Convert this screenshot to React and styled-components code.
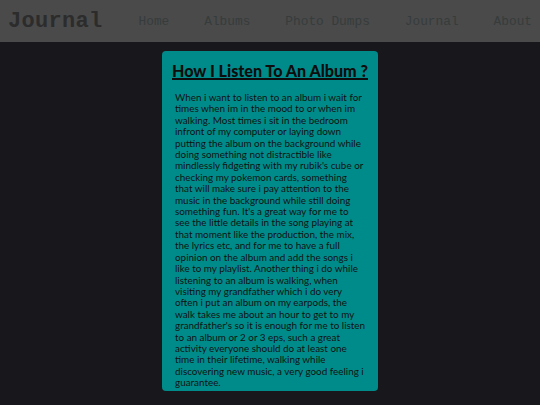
import React from "react";
import styled, { createGlobalStyle } from "styled-components";

const Global = createGlobalStyle`
  html, body { margin: 0; padding: 0; background: #18171c; }
  #root { min-height: 405px; }
`;

const Header = styled.header`
  height: 42px;
  background: #4a4a4a;
  display: flex;
  align-items: center;
  justify-content: space-between;
  padding: 0 8px 0 8px;
  box-sizing: border-box;
`;

const Logo = styled.div`
  font-family: "Liberation Mono", "DejaVu Sans Mono", monospace;
  font-weight: 700;
  font-size: 22px;
  color: #2c2c2c;
  letter-spacing: 0.3px;
`;

const Nav = styled.nav`
  display: flex;
  gap: 35px;
`;

const NavLink = styled.a`
  font-family: "Liberation Mono", "DejaVu Sans Mono", monospace;
  font-size: 12.8px;
  color: #363c3c;
  text-decoration: none;
`;

const Main = styled.main`
  display: flex;
  justify-content: center;
  padding-top: 9px;
`;

const Card = styled.article`
  width: 216px;
  box-sizing: border-box;
  background: #008b8b;
  border-radius: 4px;
  padding: 10px 13px 2px 13px;
`;

const Title = styled.h1`
  margin: 0 -12px;
  font-family: "Lato", "Noto Sans", sans-serif;
  font-weight: 900;
  font-size: 16.1px;
  text-align: center;
  text-decoration: underline;
  text-decoration-thickness: 1.5px;
  color: #0d0d0d;
  white-space: nowrap;
`;

const Body = styled.p`
  margin: 12px 0 0 0;
  font-family: "Lato", "Noto Sans", sans-serif;
  font-size: 9.9px;
  line-height: 11.4px;
  color: #111;
  white-space: nowrap;
`;

const lines = [
  "When i want to listen to an album i wait for",
  "times when im in the mood to or when im",
  "walking. Most times i sit in the bedroom",
  "infront of my computer or laying down",
  "putting the album on the background while",
  "doing something not distractible like",
  "mindlessly fidgeting with my rubik's cube or",
  "checking my pokemon cards, something",
  "that will make sure i pay attention to the",
  "music in the background while still doing",
  "something fun. It's a great way for me to",
  "see the little details in the song playing at",
  "that moment like the production, the mix,",
  "the lyrics etc, and for me to have a full",
  "opinion on the album and add the songs i",
  "like to my playlist. Another thing i do while",
  "listening to an album is walking, when",
  "visiting my grandfather which i do very",
  "often i put an album on my earpods, the",
  "walk takes me about an hour to get to my",
  "grandfather's so it is enough for me to listen",
  "to an album or 2 or 3 eps, such a great",
  "activity everyone should do at least one",
  "time in their lifetime, walking while",
  "discovering new music, a very good feeling i",
  "guarantee.",
];

export default function App() {
  const links = ["Home", "Albums", "Photo Dumps", "Journal", "About"];
  return (
    <>
      <Global />
      <Header>
        <Logo>Journal</Logo>
        <Nav>
          {links.map((l) => (
            <NavLink key={l}>{l}</NavLink>
          ))}
        </Nav>
      </Header>
      <Main>
        <Card>
          <Title>How I Listen To An Album ?</Title>
          <Body>
            {lines.map((l, i) => (
              <React.Fragment key={i}>
                {l}
                {i < lines.length - 1 && <br />}
              </React.Fragment>
            ))}
          </Body>
        </Card>
      </Main>
    </>
  );
}
